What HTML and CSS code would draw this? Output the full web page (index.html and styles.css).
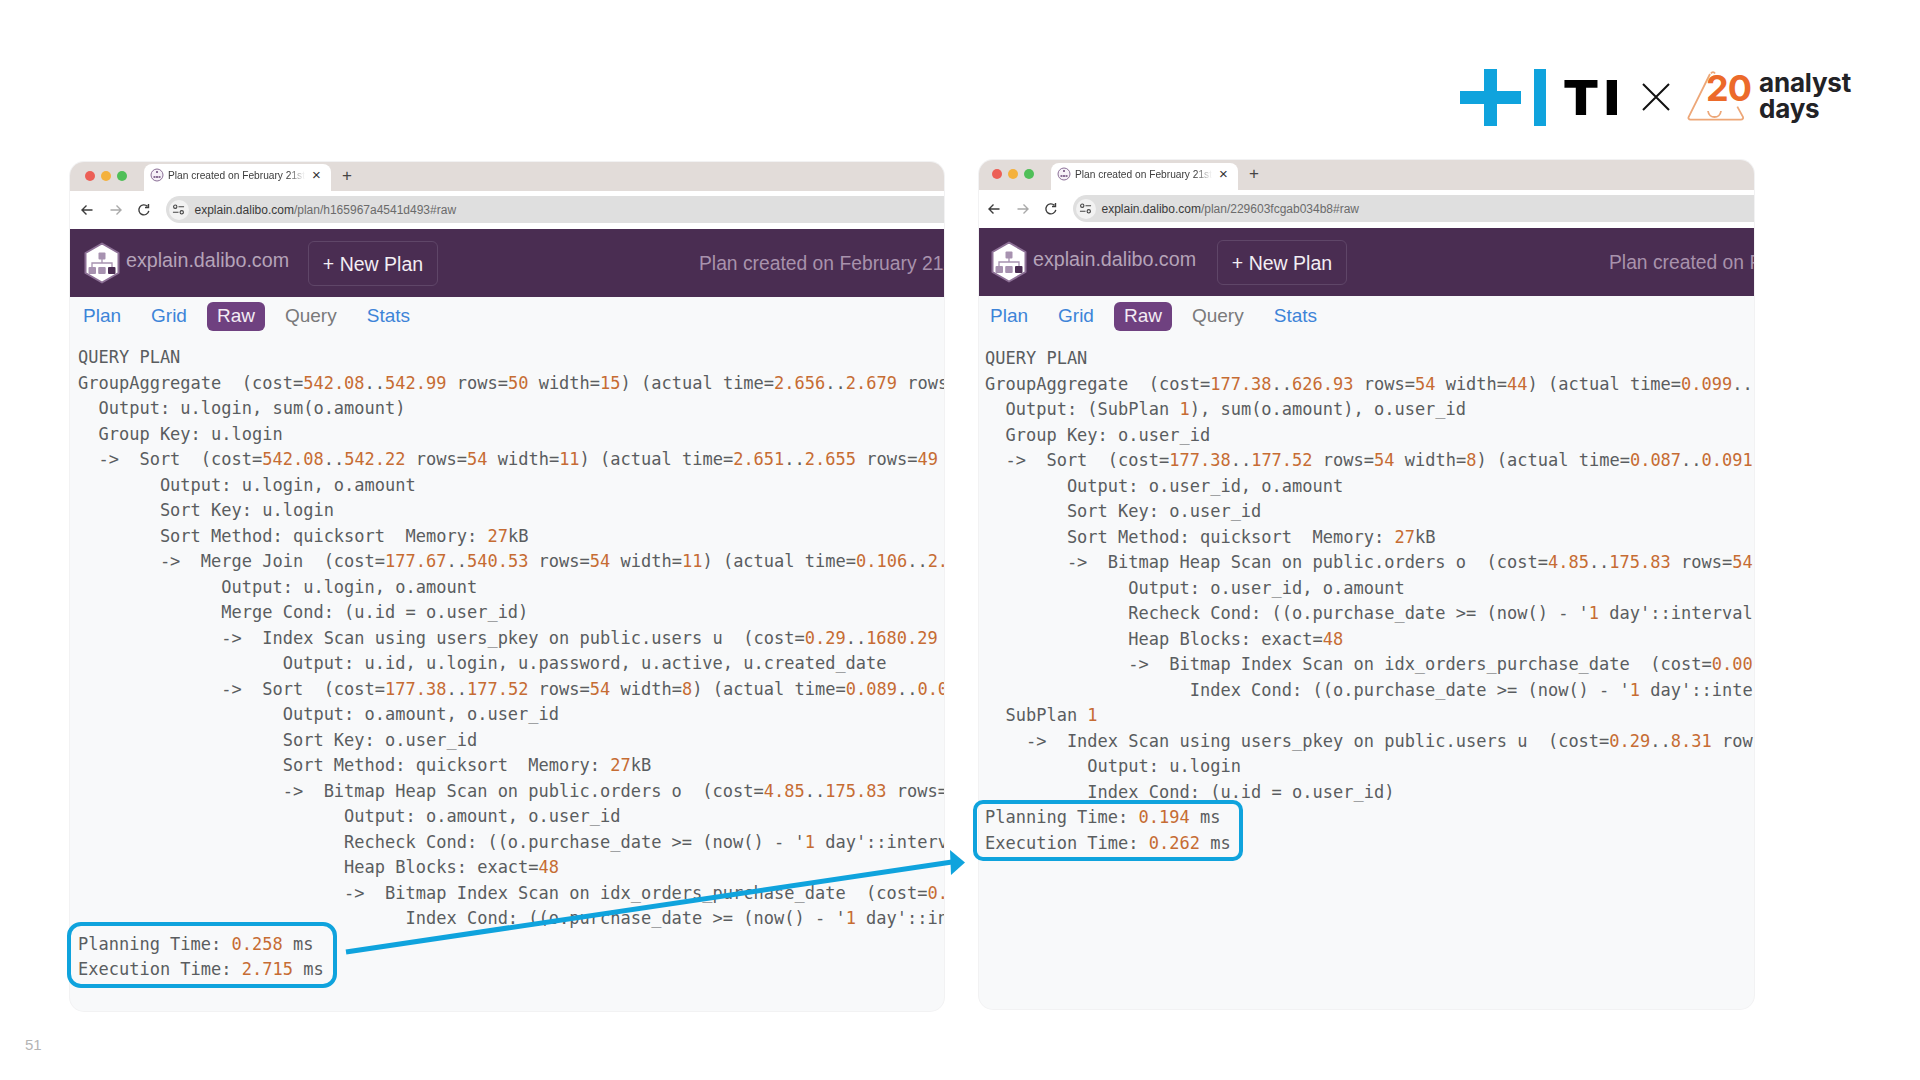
FILE: index.html
```html
<!DOCTYPE html>
<html lang="en">
<head>
<meta charset="utf-8">
<title>Plan comparison</title>
<link rel="stylesheet" href="styles.css">
</head>
<body>
<main class="slide">
  <header class="top">
    <div class="brand">
      <svg class="brand-plus" viewBox="0 0 86 57" aria-hidden="true"><path d="M0 22h24V0h13v22h24v13H37v22H24V35H0z"/><path d="M74 0h12v57H74z"/></svg>
      <span class="brand-ti">TI</span>
      <svg class="brand-x" viewBox="0 0 28 28" aria-hidden="true"><path d="M1 1l26 26M27 1L1 27"/></svg>
      <div class="days">
        <svg class="days-tri" viewBox="0 0 57 50" aria-hidden="true"><path d="M24 2.500C25 .6 27 .8 28 2.500" /><path d="M23 3L1.600 46c-.5 1.400.2 2.600 1.800 2.600h50.400c2 0 2.800-1.400 2-3l-5.500-10" /><path d="M21 40c1 8 12 8 13 0"/></svg>
        <span class="days-num">20</span>
        <span class="days-text">analyst<br>days</span>
      </div>
    </div>
  </header>

  <section class="windows">
    <article class="win win-left">
      <div class="tabbar">
        <div class="dots"><i class="dot red"></i><i class="dot amber"></i><i class="dot green"></i></div>
        <div class="tab">
          <svg class="favicon" viewBox="0 0 14 14" aria-hidden="true"><circle cx="7" cy="7" r="6" fill="#f6f1f8" stroke="#8a6f96"/><path d="M6 3h2v2H6zM3.500 8h2v2h-2zM6 8h2v2H6zM8.500 8h2v2h-2z" fill="#8a6f96"/></svg>
          <span class="tab-title">Plan created on February 21st</span>
          <span class="tab-close">×</span>
        </div>
        <span class="tab-new">+</span>
      </div>
      <div class="addr">
        <svg class="nav-ico" viewBox="0 0 14 14" aria-hidden="true"><path d="M12.500 7H2M6.500 2.500L2 7l4.500 4.500" fill="none" stroke="#3c3c3c" stroke-width="1.400"/></svg>
        <svg class="nav-ico" viewBox="0 0 14 14" aria-hidden="true"><path d="M1.500 7H12M7.500 2.500L12 7l-4.500 4.500" fill="none" stroke="#a9a9a9" stroke-width="1.400"/></svg>
        <svg class="nav-ico" viewBox="0 0 14 14" aria-hidden="true"><path d="M11.800 7.800A5 5 0 1 1 10.400 3.300M11.500 1v3.500H8" fill="none" stroke="#3c3c3c" stroke-width="1.400"/></svg>
        <div class="url">
          <span class="url-ico"><svg viewBox="0 0 14 14" aria-hidden="true"><circle cx="3.500" cy="4" r="1.800"/><path d="M7 4h6M1 10h6"/><circle cx="10.500" cy="10" r="1.800"/></svg></span>
          <span class="url-host">explain.dalibo.com</span><span class="url-path">/plan/h165967a4541d493#raw</span>
        </div>
      </div>
      <div class="appbar">
        <svg class="hex" viewBox="0 0 38 42" aria-hidden="true"><path d="M19 1.500l16.500 9.500v20L19 40.500 2.500 31V11z" fill="#fff" stroke="#8d7096" stroke-width="2" stroke-linejoin="round"/><path d="M19 17v4M9 25v-4h20v4" fill="none" stroke="#a792b0" stroke-width="1.300"/><rect x="15.500" y="10.500" width="7" height="7" rx="1" fill="#a792b0"/><rect x="5.500" y="25" width="7.500" height="7" rx="1" fill="#a792b0"/><rect x="15.200" y="25" width="7.500" height="7" rx="1" fill="#a792b0"/><rect x="25" y="25" width="7.500" height="7" rx="1" fill="#4a2d52"/></svg>
        <span class="site">explain.dalibo.com</span>
        <span class="newplan">+ New Plan</span>
        <span class="plan-title">Plan created on February 21st</span>
      </div>
      <nav class="tabs">
        <span class="tabl">Plan</span><span class="tabl">Grid</span><span class="tabl on">Raw</span><span class="tabl off">Query</span><span class="tabl">Stats</span>
      </nav>
<pre class="plan">QUERY PLAN
GroupAggregate  (cost=<span class="n">542.08</span>..<span class="n">542.99</span> rows=<span class="n">50</span> width=<span class="n">15</span>) (actual time=<span class="n">2.656</span>..<span class="n">2.679</span> rows
  Output: u.login, sum(o.amount)
  Group Key: u.login
  -&gt;  Sort  (cost=<span class="n">542.08</span>..<span class="n">542.22</span> rows=<span class="n">54</span> width=<span class="n">11</span>) (actual time=<span class="n">2.651</span>..<span class="n">2.655</span> rows=<span class="n">49</span>
        Output: u.login, o.amount
        Sort Key: u.login
        Sort Method: quicksort  Memory: <span class="n">27</span>kB
        -&gt;  Merge Join  (cost=<span class="n">177.67</span>..<span class="n">540.53</span> rows=<span class="n">54</span> width=<span class="n">11</span>) (actual time=<span class="n">0.106</span>..<span class="n">2.</span>
              Output: u.login, o.amount
              Merge Cond: (u.id = o.user_id)
              -&gt;  Index Scan using users_pkey on public.users u  (cost=<span class="n">0.29</span>..<span class="n">1680.29</span>
                    Output: u.id, u.login, u.password, u.active, u.created_date
              -&gt;  Sort  (cost=<span class="n">177.38</span>..<span class="n">177.52</span> rows=<span class="n">54</span> width=<span class="n">8</span>) (actual time=<span class="n">0.089</span>..<span class="n">0.0</span>
                    Output: o.amount, o.user_id
                    Sort Key: o.user_id
                    Sort Method: quicksort  Memory: <span class="n">27</span>kB
                    -&gt;  Bitmap Heap Scan on public.orders o  (cost=<span class="n">4.85</span>..<span class="n">175.83</span> rows=
                          Output: o.amount, o.user_id
                          Recheck Cond: ((o.purchase_date &gt;= (now() - '<span class="n">1</span> day'::interv
                          Heap Blocks: exact=<span class="n">48</span>
                          -&gt;  Bitmap Index Scan on idx_orders_purchase_date  (cost=<span class="n">0.</span>
                                Index Cond: ((o.purchase_date &gt;= (now() - '<span class="n">1</span> day'::in
Planning Time: <span class="n">0.258</span> ms
Execution Time: <span class="n">2.715</span> ms</pre>
    </article>

    <article class="win win-right">
      <div class="tabbar">
        <div class="dots"><i class="dot red"></i><i class="dot amber"></i><i class="dot green"></i></div>
        <div class="tab">
          <svg class="favicon" viewBox="0 0 14 14" aria-hidden="true"><circle cx="7" cy="7" r="6" fill="#f6f1f8" stroke="#8a6f96"/><path d="M6 3h2v2H6zM3.500 8h2v2h-2zM6 8h2v2H6zM8.500 8h2v2h-2z" fill="#8a6f96"/></svg>
          <span class="tab-title">Plan created on February 21st</span>
          <span class="tab-close">×</span>
        </div>
        <span class="tab-new">+</span>
      </div>
      <div class="addr">
        <svg class="nav-ico" viewBox="0 0 14 14" aria-hidden="true"><path d="M12.500 7H2M6.500 2.500L2 7l4.500 4.500" fill="none" stroke="#3c3c3c" stroke-width="1.400"/></svg>
        <svg class="nav-ico" viewBox="0 0 14 14" aria-hidden="true"><path d="M1.500 7H12M7.500 2.500L12 7l-4.500 4.500" fill="none" stroke="#a9a9a9" stroke-width="1.400"/></svg>
        <svg class="nav-ico" viewBox="0 0 14 14" aria-hidden="true"><path d="M11.800 7.800A5 5 0 1 1 10.400 3.300M11.500 1v3.500H8" fill="none" stroke="#3c3c3c" stroke-width="1.400"/></svg>
        <div class="url">
          <span class="url-ico"><svg viewBox="0 0 14 14" aria-hidden="true"><circle cx="3.500" cy="4" r="1.800"/><path d="M7 4h6M1 10h6"/><circle cx="10.500" cy="10" r="1.800"/></svg></span>
          <span class="url-host">explain.dalibo.com</span><span class="url-path">/plan/229603fcgab034b8#raw</span>
        </div>
      </div>
      <div class="appbar">
        <svg class="hex" viewBox="0 0 38 42" aria-hidden="true"><path d="M19 1.500l16.500 9.500v20L19 40.500 2.500 31V11z" fill="#fff" stroke="#8d7096" stroke-width="2" stroke-linejoin="round"/><path d="M19 17v4M9 25v-4h20v4" fill="none" stroke="#a792b0" stroke-width="1.300"/><rect x="15.500" y="10.500" width="7" height="7" rx="1" fill="#a792b0"/><rect x="5.500" y="25" width="7.500" height="7" rx="1" fill="#a792b0"/><rect x="15.200" y="25" width="7.500" height="7" rx="1" fill="#a792b0"/><rect x="25" y="25" width="7.500" height="7" rx="1" fill="#4a2d52"/></svg>
        <span class="site">explain.dalibo.com</span>
        <span class="newplan">+ New Plan</span>
        <span class="plan-title">Plan created on February 21st</span>
      </div>
      <nav class="tabs">
        <span class="tabl">Plan</span><span class="tabl">Grid</span><span class="tabl on">Raw</span><span class="tabl off">Query</span><span class="tabl">Stats</span>
      </nav>
<pre class="plan">QUERY PLAN
GroupAggregate  (cost=<span class="n">177.38</span>..<span class="n">626.93</span> rows=<span class="n">54</span> width=<span class="n">44</span>) (actual time=<span class="n">0.099</span>..
  Output: (SubPlan <span class="n">1</span>), sum(o.amount), o.user_id
  Group Key: o.user_id
  -&gt;  Sort  (cost=<span class="n">177.38</span>..<span class="n">177.52</span> rows=<span class="n">54</span> width=<span class="n">8</span>) (actual time=<span class="n">0.087</span>..<span class="n">0.091</span>
        Output: o.user_id, o.amount
        Sort Key: o.user_id
        Sort Method: quicksort  Memory: <span class="n">27</span>kB
        -&gt;  Bitmap Heap Scan on public.orders o  (cost=<span class="n">4.85</span>..<span class="n">175.83</span> rows=<span class="n">54</span>
              Output: o.user_id, o.amount
              Recheck Cond: ((o.purchase_date &gt;= (now() - '<span class="n">1</span> day'::interval
              Heap Blocks: exact=<span class="n">48</span>
              -&gt;  Bitmap Index Scan on idx_orders_purchase_date  (cost=<span class="n">0.00</span>
                    Index Cond: ((o.purchase_date &gt;= (now() - '<span class="n">1</span> day'::inte
  SubPlan <span class="n">1</span>
    -&gt;  Index Scan using users_pkey on public.users u  (cost=<span class="n">0.29</span>..<span class="n">8.31</span> row
          Output: u.login
          Index Cond: (u.id = o.user_id)
Planning Time: <span class="n">0.194</span> ms
Execution Time: <span class="n">0.262</span> ms</pre>
    </article>
  </section>

  <div class="mark mark-left"></div>
  <div class="mark mark-right"></div>
  <svg class="arrow" viewBox="0 0 1920 1080" aria-hidden="true"><path class="arrow-line" d="M346 952L952 862"/><path class="arrow-head" d="M950 850L965 862.500L951 875z"/></svg>
  <span class="pageno">51</span>
</main>
</body>
</html>
```

FILE: styles.css
```css
* { box-sizing: border-box; }
html, body { margin: 0; padding: 0; background: #fff; }
.slide {
  position: relative;
  width: 1920px;
  height: 1080px;
  overflow: hidden;
  font-family: "Liberation Sans", Arial, sans-serif;
}

/* brand row */
.top {
  height: 160px;
  display: flex;
  justify-content: flex-end;
  align-items: flex-start;
  padding: 69px 67px 0 0;
}
.brand { display: flex; align-items: flex-start; }
.brand-plus { width: 86px; height: 57px; fill: #0fa3dd; margin-right: 17px; }
.brand-ti {
  font-family: Inter, sans-serif;
  font-weight: 900;
  font-size: 48px;
  line-height: 57px;
  height: 57px;
  width: 55px;
  letter-spacing: 5px;
  color: #000;
  margin-right: 24px;
  white-space: nowrap;
  transform: scaleX(1.09);
  transform-origin: 0 50%;
}
.brand-x { width: 28px; height: 28px; margin: 14px 17px 0 0; fill: none; stroke: #111; stroke-width: 2; }
.days { position: relative; width: 166px; height: 52px; margin-top: 2px; }
.days-tri {
  position: absolute; left: 0; top: 0; width: 57px; height: 50px;
  fill: none; stroke: #eda778; stroke-width: 1.800;
}
.days-num {
  position: absolute; left: 19px; top: -2px;
  font-family: Inter, sans-serif; font-weight: 700; font-size: 36px; line-height: 38px;
  letter-spacing: -1px; color: #ec6a2a;
}
.days-text {
  position: absolute; left: 72px; top: -1px;
  font-family: Inter, sans-serif; font-weight: 700; font-size: 26px; line-height: 26px;
  letter-spacing: -.2px;
  color: #222226;
}

/* windows */
.windows { display: flex; align-items: flex-start; gap: 35px; padding-left: 70px; }
.win {
  height: 849px;
  background: #f8f9fa;
  border-radius: 14px;
  overflow: hidden;
  box-shadow: 0 0 0 1px #f2f2f3;
  flex: none;
}
.win-left { width: 874px; margin-top: 2px; --shift: 0px; --tabh: 29px; --navtop: 5px; --titlegap: 261px; --plantop: 14px; }
.win-right { width: 775px; --shift: -2px; --tabh: 30px; --navtop: 6px; --titlegap: 262px; --plantop: 15px; }

.tabbar {
  height: var(--tabh);
  background: #e2dcd9;
  display: flex;
  align-items: flex-end;
  padding-left: calc(15px + var(--shift));
}
.dots { display: flex; gap: 6px; align-self: center; margin: 0 17px 2px 0; }
.dot { width: 10px; height: 10px; border-radius: 50%; display: block; }
.red { background: #ec5f56; }
.amber { background: #f4b13c; }
.green { background: #4fbf58; }
.tab {
  width: 187px;
  height: 27px;
  background: #fff;
  border-radius: 8px 8px 0 0;
  display: flex;
  align-items: center;
  padding: 0 0 5px 6px;
  font-size: 10.200px;
  color: #3d3d3d;
}
.favicon { width: 14px; height: 14px; flex: none; margin-right: 4px; }
.tab-title {
  width: 137px;
  overflow: hidden;
  white-space: nowrap;
  -webkit-mask-image: linear-gradient(90deg, #000 88%, transparent);
  mask-image: linear-gradient(90deg, #000 88%, transparent);
}
.tab-close { margin-left: 7px; font-size: 15px; line-height: 14px; color: #333; }
.tab-new { align-self: center; margin: 0 0 3px 11px; font-size: 17px; line-height: 17px; color: #444; }

.addr {
  height: 38px;
  background: #fff;
  display: flex;
  align-items: center;
  padding: 0 0 0 calc(10px + var(--shift));
  gap: 14.500px;
}
.nav-ico { width: 14px; height: 14px; flex: none; }
.url {
  flex: 1;
  height: 27px;
  background: #dfdfdf;
  border-radius: 14px 0 0 14px;
  display: flex;
  align-items: center;
  margin-bottom: 1px;
  padding-left: 3px;
  font-size: 12px;
  white-space: nowrap;
}
.url-ico {
  width: 20px; height: 20px; border-radius: 50%; background: #f2f2f2;
  display: flex; align-items: center; justify-content: center; margin-right: 6px;
}
.url-ico svg { width: 13px; height: 13px; fill: none; stroke: #444; stroke-width: 1.200; }
.url-host { color: #3a3a3a; }
.url-path { color: #6b6b6b; }

.appbar {
  height: 68px;
  background: #4a2d52;
  display: flex;
  align-items: center;
  padding-left: calc(13px + var(--shift));
  overflow: hidden;
  white-space: nowrap;
}
.hex { width: 38px; height: 42px; flex: none; margin-bottom: 1px; }
.site { color: #b5a3b9; font-size: 19.700px; margin: 0 0 5px 5px; width: calc(182px - var(--shift)); flex: none; }
.newplan {
  width: 130px; height: 45px; flex: none;
  border: 1px solid #5f4668; border-radius: 6px;
  color: #f3eef4; font-size: 19.500px; line-height: 45px; text-align: center;
}
.plan-title { color: #a892ac; font-size: 19.300px; margin: 2px 0 0 var(--titlegap); flex: none; }

.tabs {
  display: flex; gap: 10px;
  margin-top: var(--navtop);
  padding-left: calc(3px + var(--shift));
  height: 29px;
}
.tabl { padding: 0 10px; border-radius: 6px; font-size: 19px; line-height: 28px; color: #3d84d8; }
.tabl.on { background: #6f4180; color: #f3ecf4; }
.tabl.off { color: #7a7a7a; }

.plan {
  margin: var(--plantop) 0 0;
  padding-left: calc(8px + var(--shift));
  font-family: "DejaVu Sans Mono", monospace;
  font-size: 17px;
  line-height: 25.500px;
  color: #5a5d60;
  white-space: pre;
  overflow: hidden;
}
.n { color: #c66c33; }

/* annotations over the windows */
.mark { position: absolute; border: 4px solid #0fa3dd; border-radius: 14px; }
.mark-left { left: 67px; top: 922px; width: 270px; height: 66px; }
.mark-right { left: 973px; top: 800px; width: 270px; height: 61px; border-radius: 10px; }
.arrow { position: absolute; left: 0; top: 0; width: 1920px; height: 1080px; pointer-events: none; }
.arrow-line { stroke: #0fa3dd; stroke-width: 5; fill: none; }
.arrow-head { fill: #0fa3dd; }
.pageno { position: absolute; left: 25px; top: 1036px; font-size: 15px; line-height: 18px; color: #b4b4b4; }
```
